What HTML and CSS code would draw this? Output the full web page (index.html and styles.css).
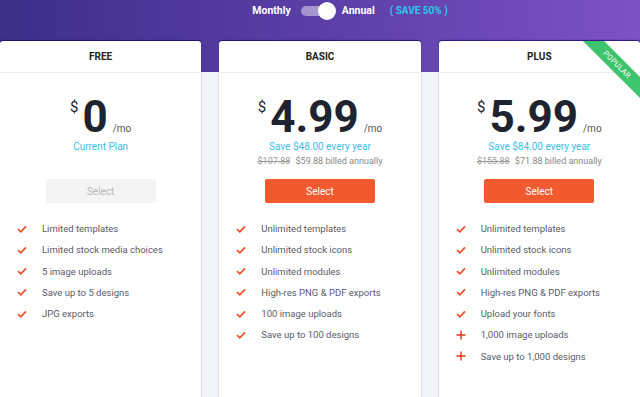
FILE: index.html
```html
<!DOCTYPE html>
<html lang="en">
<head>
  <meta charset="UTF-8">
  <meta name="viewport" content="width=device-width, initial-scale=1.0">
  <title>Pricing</title>
  <link rel="stylesheet" href="styles.css">
</head>
<body>
  <div class="hero">
    <div class="billing">
      <span class="period">Monthly</span>
      <span class="switch"><span class="knob"></span></span>
      <span class="period">Annual</span>
      <span class="save">( SAVE 50% )</span>
    </div>
  </div>

  <div class="plans">
    <div class="plan">
      <div class="plan-head">FREE</div>
      <div class="plan-body">
        <div class="price">
          <span class="cur">$</span><span class="amount">0</span><span class="per">/mo</span>
        </div>
        <div class="info">
          <div class="saving">Current Plan</div>
        </div>
        <button class="select disabled">Select</button>
        <ul class="features">
          <li><svg class="ico" viewBox="0 0 10 10"><path d="M1 5.2 L3.8 7.8 L9 2.4"/></svg>Limited templates</li>
          <li><svg class="ico" viewBox="0 0 10 10"><path d="M1 5.2 L3.8 7.8 L9 2.4"/></svg>Limited stock media choices</li>
          <li><svg class="ico" viewBox="0 0 10 10"><path d="M1 5.2 L3.8 7.8 L9 2.4"/></svg>5 image uploads</li>
          <li><svg class="ico" viewBox="0 0 10 10"><path d="M1 5.2 L3.8 7.8 L9 2.4"/></svg>Save up to 5 designs</li>
          <li><svg class="ico" viewBox="0 0 10 10"><path d="M1 5.2 L3.8 7.8 L9 2.4"/></svg>JPG exports</li>
        </ul>
      </div>
    </div>

    <div class="plan">
      <div class="plan-head">BASIC</div>
      <div class="plan-body">
        <div class="price">
          <span class="cur">$</span><span class="amount">4.99</span><span class="per">/mo</span>
        </div>
        <div class="info">
          <div class="saving">Save $48.00 every year</div>
          <div class="billed"><s>$107.88</s> $59.88 billed annually</div>
        </div>
        <button class="select">Select</button>
        <ul class="features">
          <li><svg class="ico" viewBox="0 0 10 10"><path d="M1 5.2 L3.8 7.8 L9 2.4"/></svg>Unlimited templates</li>
          <li><svg class="ico" viewBox="0 0 10 10"><path d="M1 5.2 L3.8 7.8 L9 2.4"/></svg>Unlimited stock icons</li>
          <li><svg class="ico" viewBox="0 0 10 10"><path d="M1 5.2 L3.8 7.8 L9 2.4"/></svg>Unlimited modules</li>
          <li><svg class="ico" viewBox="0 0 10 10"><path d="M1 5.2 L3.8 7.8 L9 2.4"/></svg>High-res PNG &amp; PDF exports</li>
          <li><svg class="ico" viewBox="0 0 10 10"><path d="M1 5.2 L3.8 7.8 L9 2.4"/></svg>100 image uploads</li>
          <li><svg class="ico" viewBox="0 0 10 10"><path d="M1 5.2 L3.8 7.8 L9 2.4"/></svg>Save up to 100 designs</li>
        </ul>
      </div>
    </div>

    <div class="plan">
      <div class="ribbon">POPULAR</div>
      <div class="plan-head">PLUS</div>
      <div class="plan-body">
        <div class="price">
          <span class="cur">$</span><span class="amount">5.99</span><span class="per">/mo</span>
        </div>
        <div class="info">
          <div class="saving">Save $84.00 every year</div>
          <div class="billed"><s>$155.88</s> $71.88 billed annually</div>
        </div>
        <button class="select">Select</button>
        <ul class="features">
          <li><svg class="ico" viewBox="0 0 10 10"><path d="M1 5.2 L3.8 7.8 L9 2.4"/></svg>Unlimited templates</li>
          <li><svg class="ico" viewBox="0 0 10 10"><path d="M1 5.2 L3.8 7.8 L9 2.4"/></svg>Unlimited stock icons</li>
          <li><svg class="ico" viewBox="0 0 10 10"><path d="M1 5.2 L3.8 7.8 L9 2.4"/></svg>Unlimited modules</li>
          <li><svg class="ico" viewBox="0 0 10 10"><path d="M1 5.2 L3.8 7.8 L9 2.4"/></svg>High-res PNG &amp; PDF exports</li>
          <li><svg class="ico" viewBox="0 0 10 10"><path d="M1 5.2 L3.8 7.8 L9 2.4"/></svg>Upload your fonts</li>
          <li><svg class="ico plus" viewBox="0 0 10 10"><path d="M5 0.5 V9.5 M0.5 5 H9.5"/></svg>1,000 image uploads</li>
          <li><svg class="ico plus" viewBox="0 0 10 10"><path d="M5 0.5 V9.5 M0.5 5 H9.5"/></svg>Save up to 1,000 designs</li>
        </ul>
      </div>
    </div>
  </div>
</body>
</html>
```

FILE: styles.css
```css
body {
  margin: 0;
  font-family: Roboto, "Liberation Sans", sans-serif;
  background: #f3f4f7;
  overflow: hidden;
}

.hero {
  height: 72px;
  background: linear-gradient(90deg, #3c3088 0%, #5a3fa7 50%, #7c52c4 100%);
}
.billing {
  display: flex;
  justify-content: center;
  align-items: center;
  height: 21px;
  padding-left: 60px;
  color: #fff;
  font-size: 10.5px;
  font-weight: 700;
}
.switch {
  position: relative;
  width: 34px;
  height: 10px;
  margin: 0 7px 0 10px;
  border-radius: 5px;
  background: rgba(255, 255, 255, 0.45);
}
.knob {
  position: absolute;
  right: -1px;
  top: -4px;
  width: 18px;
  height: 18px;
  border-radius: 50%;
  background: #fff;
}
.save {
  margin-left: 15px;
  color: #2ec6e8;
  font-size: 10px;
}

.plans {
  display: grid;
  grid-template-columns: repeat(3, 1fr);
  gap: 18px;
  margin-top: -31px;
}
.plan {
  position: relative;
  overflow: hidden;
  min-height: 380px;
  background: #fff;
  border-radius: 3px 3px 0 0;
  box-shadow: 0 -1px 1px rgba(20, 10, 110, 0.8);
}
.plan-head {
  height: 31px;
  line-height: 32px;
  text-align: center;
  font-size: 10px;
  font-weight: 700;
  color: #222;
  border-bottom: 1px solid #ececf0;
}
.ribbon {
  position: absolute;
  top: 16px;
  right: -22px;
  width: 90px;
  height: 15px;
  line-height: 15px;
  text-align: center;
  color: #fff;
  font-size: 7.5px;
  letter-spacing: 0.3px;
  background: #3fc46e;
  transform: rotate(45deg);
}

.plan-body {
  padding-top: 27px;
  text-align: center;
}
.price {
  display: flex;
  justify-content: center;
  align-items: baseline;
  height: 36px;
  color: #1e2330;
}
.cur {
  align-self: flex-start;
  margin-right: 4px;
  font-size: 15px;
  line-height: 15px;
}
.amount {
  font-size: 44px;
  line-height: 34px;
  font-weight: 700;
}
.per {
  margin-left: 5px;
  font-size: 10px;
  line-height: 12px;
  color: #555;
}
.info {
  height: 28px;
  margin-top: 4px;
  line-height: 14px;
}
.saving {
  color: #40bde9;
  font-size: 10px;
}
.billed {
  color: #888;
  font-size: 9px;
}
.billed s {
  margin-right: 3px;
  color: #999;
}

.select {
  display: block;
  width: 110px;
  height: 24px;
  margin: 11px auto 0;
  border: 0;
  border-radius: 2px;
  background: #f05a2e;
  color: #fff;
  font-family: inherit;
  font-size: 10px;
}
.select.disabled {
  background: #f4f4f4;
  color: #b8b8b8;
}

.features {
  list-style: none;
  margin: 15px 0 0;
  padding: 0 0 0 17px;
  text-align: left;
}
.features li {
  display: flex;
  align-items: center;
  height: 21.25px;
  font-size: 9.5px;
  color: #585c68;
}
.ico {
  width: 10px;
  height: 10px;
  margin-right: 15px;
  fill: none;
  stroke: #f0502a;
  stroke-width: 1.8;
}
.ico.plus {
  stroke: #e8321e;
  stroke-width: 1.4;
}
```
